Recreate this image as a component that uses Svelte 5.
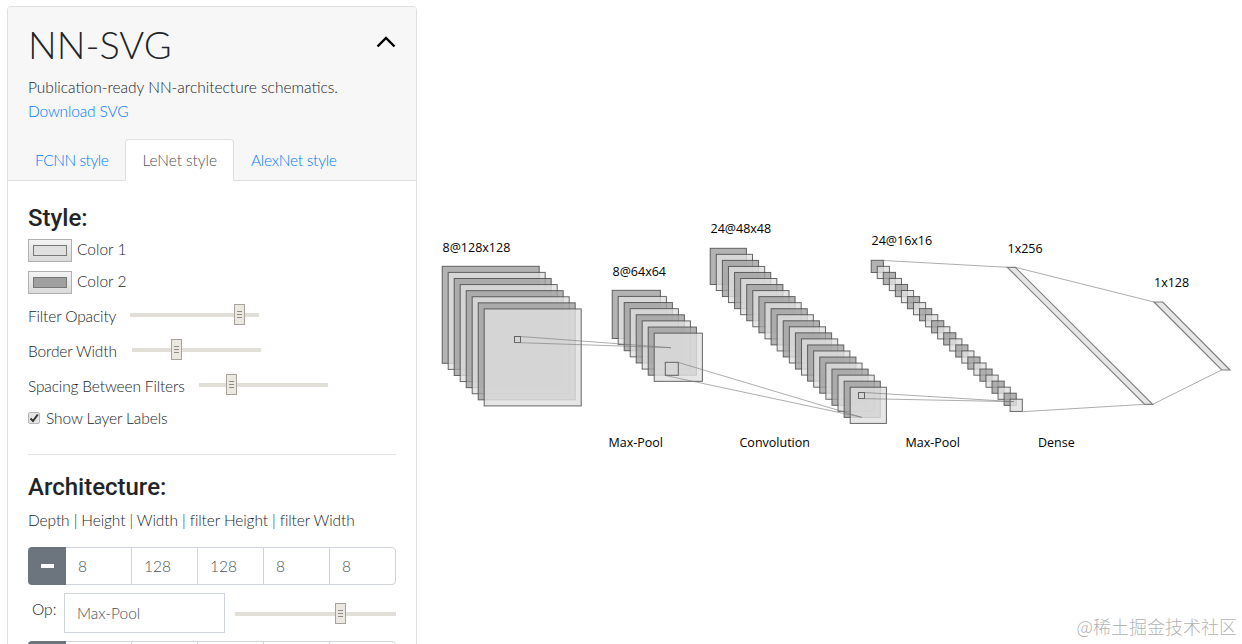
<script>
  const layers = [
    { x: 442.2, y: 266.3, s: 97, n: 8, sx: 6, sy: 6.09 },
    { x: 612.2, y: 290.3, s: 48.2, n: 8, sx: 6, sy: 6.12 },
    { x: 710.2, y: 248.3, s: 36.2, n: 24, sx: 6.087, sy: 6.04 },
    { x: 871.2, y: 260.3, s: 12.2, n: 24, sx: 6.04, sy: 6.04 }
  ];
  const rects = layers.flatMap((l) =>
    Array.from({ length: l.n }, (_, i) => ({
      x: l.x + i * l.sx,
      y: l.y + i * l.sy,
      s: l.s,
      dark: i % 2 === 0
    }))
  );
  const boxes = [
    { x: 514.5, y: 336.5, s: 6 },
    { x: 665.3, y: 362.3, s: 13 },
    { x: 858.5, y: 392.5, s: 6 }
  ];
  const lines = [
    [520.5, 336.5, 671, 347.7],
    [514.5, 342.5, 671, 347.7],
    [678.5, 362.5, 861.7, 417.3],
    [665.5, 375.5, 861.7, 417.3],
    [864.5, 392.5, 1014, 401.7],
    [858.5, 398.5, 1014, 401.7],
    [883.7, 260.5, 1007.3, 267.3],
    [1022.7, 411.7, 1144.7, 404.3],
    [1015.3, 267.3, 1154, 302],
    [1152.7, 404.3, 1221.7, 370]
  ];
  const dense = [
    '1007.3,267.3 1015.3,267.3 1152.7,404.3 1144.7,404.3',
    '1154,302 1162.7,302 1230,370 1221.7,370'
  ];
  const labels = [
    [442.5, 252, '8@128x128'],
    [612.5, 276, '8@64x64'],
    [710.5, 233, '24@48x48'],
    [871.5, 245, '24@16x16'],
    [1007.5, 253, '1x256'],
    [1154, 287, '1x128'],
    [608.5, 447, 'Max-Pool'],
    [739.5, 447, 'Convolution'],
    [905.5, 447, 'Max-Pool'],
    [1038, 447, 'Dense']
  ];
  const sliders = [
    { label: 'Filter Opacity', value: 88.4, wide: false },
    { label: 'Border Width', value: 33, wide: true },
    { label: 'Spacing Between Filters', value: 23, wide: false }
  ];
  const row = ['8', '128', '128', '8', '8'];
</script>

<div class="page">
  <section class="card">
    <header class="head">
      <div class="title">
        <h1>NN-SVG</h1>
        <svg class="chev" width="20" height="12" viewBox="0 0 20 12"><path d="M1.500 10.500 10 2l8.500 8.500" /></svg>
      </div>
      <p>Publication-ready NN-architecture schematics.</p>
      <a class="dl" href="#dl">Download SVG</a>
      <nav class="tabs">
        <a class="first" href="#fcnn">FCNN style</a>
        <a href="#lenet" class="active">LeNet style</a>
        <a href="#alexnet">AlexNet style</a>
      </nav>
    </header>
    <div class="body">
      <h2>Style:</h2>
      <div class="color"><span class="swatch"><i class="c1"></i></span><span class="ctext">Color 1</span></div>
      <div class="color"><span class="swatch"><i class="c2"></i></span><span class="ctext">Color 2</span></div>
      {#each sliders as s}
        <div class="srow" class:wide={s.wide}>
          <label for={s.label}>{s.label}</label>
          <input id={s.label} class="range" type="range" min="0" max="100" step="0.1" value={s.value} />
        </div>
      {/each}
      <div class="check">
        <span class="box"><svg width="10" height="10" viewBox="0 0 10 10"><path d="M1.500 5.500 4 8l4.800-6.500" /></svg></span>
        Show Layer Labels
      </div>
      <hr />
      <h2 class="arch">Architecture:</h2>
      <p class="hint">Depth | Height | Width | filter Height | filter Width</p>
      <div class="group">
        <button aria-label="Remove layer"><span></span></button>
        {#each row as v}<input type="text" value={v} />{/each}
      </div>
      <div class="op">
        <span>Op:</span>
        <input class="optext" type="text" value="Max-Pool" />
        <input class="range oprange" type="range" min="0" max="100" step="0.1" value="66.7" />
      </div>
      <div class="group">
        <button aria-label="Remove layer"><span></span></button>
        {#each row as v}<input type="text" value={v} />{/each}
      </div>
    </div>
  </section>

  <svg class="net" width="1242" height="644" viewBox="0 0 1242 644">
    {#each rects as r}
      <rect x={r.x} y={r.y} width={r.s} height={r.s} class={r.dark ? 'dark' : 'light'} />
    {/each}
    {#each dense as p}<polygon points={p} class="light band" />{/each}
    {#each boxes as b}<rect x={b.x} y={b.y} width={b.s} height={b.s} class="box-f" />{/each}
    {#each lines as l}<line x1={l[0]} y1={l[1]} x2={l[2]} y2={l[3]} />{/each}
    {#each labels as t}<text x={t[0]} y={t[1]}>{t[2]}</text>{/each}
  </svg>

  <div class="mark">@稀土掘金技术社区</div>
</div>

<style>
  :global(body) {
    margin: 0;
    background: #fff;
  }
  .page {
    position: relative;
    width: 1242px;
    height: 644px;
    overflow: hidden;
    font-family: Lato, "Liberation Sans", sans-serif;
    font-weight: 300;
    font-size: 15.5px;
    line-height: 24px;
    color: #212529;
  }
  .net {
    position: absolute;
    left: 0;
    top: 0;
    pointer-events: none;
  }
  .card {
    box-sizing: border-box;
    width: 410px;
    margin: 6px 0 0 7px;
    border: 1px solid #dfdfdf;
    border-radius: 4px 4px 0 0;
  }
  .head {
    background: #f7f7f7;
    padding: 13px 20px 0;
    border-bottom: 1px solid #dfdfdf;
    border-radius: 3px 3px 0 0;
  }
  .title {
    display: flex;
    justify-content: space-between;
    align-items: center;
    margin-bottom: 7px;
  }
  h1 {
    margin: 0;
    font-size: 38px;
    line-height: 48px;
    font-weight: 300;
  }
  .chev {
    margin-top: -5px;
  }
  .chev path {
    fill: none;
    stroke: #000;
    stroke-width: 2.4;
  }
  p {
    margin: 0;
  }
  a {
    color: #007bff;
    text-decoration: none;
  }
  .dl {
    letter-spacing: -0.15px;
  }
  .tabs {
    display: flex;
    margin: 16px 0 -1px -10px;
  }
  .tabs a {
    box-sizing: border-box;
    height: 42px;
    padding: 8px 16px;
    border: 1px solid transparent;
    border-radius: 4px 4px 0 0;
    letter-spacing: -0.25px;
  }
  .tabs .first {
    letter-spacing: -0.45px;
  }
  .tabs .active {
    color: #495057;
    background: #fff;
    border-color: #dfdfdf #dfdfdf #fff;
    letter-spacing: -0.05px;
  }
  .body {
    padding: 23px 20px 0;
  }
  h2 {
    margin: 0 0 5px;
    font-family: Roboto, sans-serif;
    font-size: 24px;
    line-height: 29px;
    font-weight: 500;
  }
  .color {
    display: flex;
    align-items: center;
    height: 24px;
    margin-bottom: 8px;
  }
  .ctext {
    position: relative;
    top: -1px;
  }
  .color + .srow {
    margin-top: -5px;
  }
  .swatch {
    box-sizing: border-box;
    display: flex;
    align-items: center;
    justify-content: center;
    width: 44px;
    height: 23px;
    margin-right: 5px;
    border: 1px solid #b0b0b0;
    background: linear-gradient(#f4f4f4, #dadada);
  }
  .swatch i {
    box-sizing: border-box;
    width: 34px;
    height: 11px;
    border: 1px solid #777;
  }
  .c1 {
    background: #e0e0e0;
  }
  .c2 {
    background: #a0a0a0;
  }
  .srow {
    display: flex;
    align-items: center;
    gap: 14px;
    height: 35px;
    letter-spacing: -0.15px;
  }
  .srow.wide {
    gap: 15px;
  }
  .srow label {
    position: relative;
    top: 1px;
  }
  .range {
    appearance: none;
    -webkit-appearance: none;
    display: block;
    width: 129px;
    height: 21px;
    margin: 0;
    padding: 0;
    background: transparent;
  }
  .range::-webkit-slider-runnable-track {
    height: 4px;
    background: #e2ded8;
  }
  .range::-webkit-slider-thumb {
    -webkit-appearance: none;
    box-sizing: border-box;
    width: 11px;
    height: 21px;
    margin-top: -8.5px;
    border: 1px solid #a8a29a;
    background:
      linear-gradient(#8f8a83, #8f8a83) center 6px / 5px 1px no-repeat,
      linear-gradient(#8f8a83, #8f8a83) center 9px / 5px 1px no-repeat,
      linear-gradient(#8f8a83, #8f8a83) center 12px / 5px 1px no-repeat,
      #ebe7e1;
  }
  .check {
    display: flex;
    align-items: center;
    height: 30px;
    margin-top: 1px;
    gap: 6px;
    letter-spacing: -0.1px;
  }
  .box {
    box-sizing: border-box;
    display: flex;
    align-items: center;
    justify-content: center;
    width: 12px;
    height: 12px;
    border: 1px solid #b5b5b5;
    border-radius: 2px;
    background: #e4e4e4;
  }
  .box path {
    fill: none;
    stroke: #333;
    stroke-width: 2;
  }
  hr {
    margin: 21px 0 18px;
    border: 0;
    border-top: 1px solid #e5e5e5;
  }
  .arch {
    margin-bottom: 6px;
  }
  .hint {
    margin-bottom: 15px;
    letter-spacing: -0.1px;
  }
  .group {
    display: flex;
    height: 38px;
  }
  .group button {
    display: flex;
    align-items: center;
    justify-content: center;
    width: 38px;
    flex: none;
    padding: 0;
    border: 0;
    border-radius: 4px 0 0 4px;
    background: #6c757d;
  }
  .group button span {
    width: 13px;
    height: 4px;
    background: #fff;
  }
  .group input {
    box-sizing: border-box;
    flex: 1;
    min-width: 0;
    margin-left: -1px;
    padding: 0 12px;
    border: 1px solid #ced4da;
    font: inherit;
    color: #495057;
    background: #fff;
  }
  .group button + input {
    margin-left: 0;
    border-left: 0;
  }
  .group input:last-child {
    border-radius: 0 4px 4px 0;
  }
  .op {
    display: flex;
    align-items: center;
    height: 40px;
    margin: 8px 0;
  }
  .op span {
    width: 36px;
    padding-left: 4px;
    box-sizing: border-box;
    position: relative;
    top: -4px;
  }
  .optext {
    box-sizing: border-box;
    width: 161px;
    height: 40px;
    padding: 0 12px;
    border: 1px solid #ced4da;
    font: inherit;
    color: #495057;
  }
  .oprange {
    width: 161px;
    margin: 1px 0 0 10px;
  }
  .dark {
    fill: rgb(160, 160, 160);
    fill-opacity: 0.8;
    stroke: #444;
    stroke-opacity: 0.8;
    stroke-width: 1;
  }
  .light {
    fill: rgb(224, 224, 224);
    fill-opacity: 0.8;
    stroke: #444;
    stroke-opacity: 0.8;
    stroke-width: 1;
  }
  .band {
    stroke-width: 1.2;
    stroke-opacity: 0.65;
  }
  .box-f {
    fill: none;
    stroke: #444;
    stroke-opacity: 0.8;
  }
  line {
    stroke: #777;
    stroke-opacity: 0.6;
    stroke-width: 1;
  }
  text {
    font-family: "Open Sans", "Liberation Sans", sans-serif;
    font-size: 12.5px;
    font-weight: 400;
    fill: #000;
  }
  .mark {
    position: absolute;
    right: 5px;
    bottom: 6px;
    font-family: "Noto Sans CJK SC", sans-serif;
    font-size: 18px;
    line-height: 24px;
    font-weight: 300;
    color: rgba(110, 110, 110, 0.55);
    white-space: nowrap;
  }
</style>
